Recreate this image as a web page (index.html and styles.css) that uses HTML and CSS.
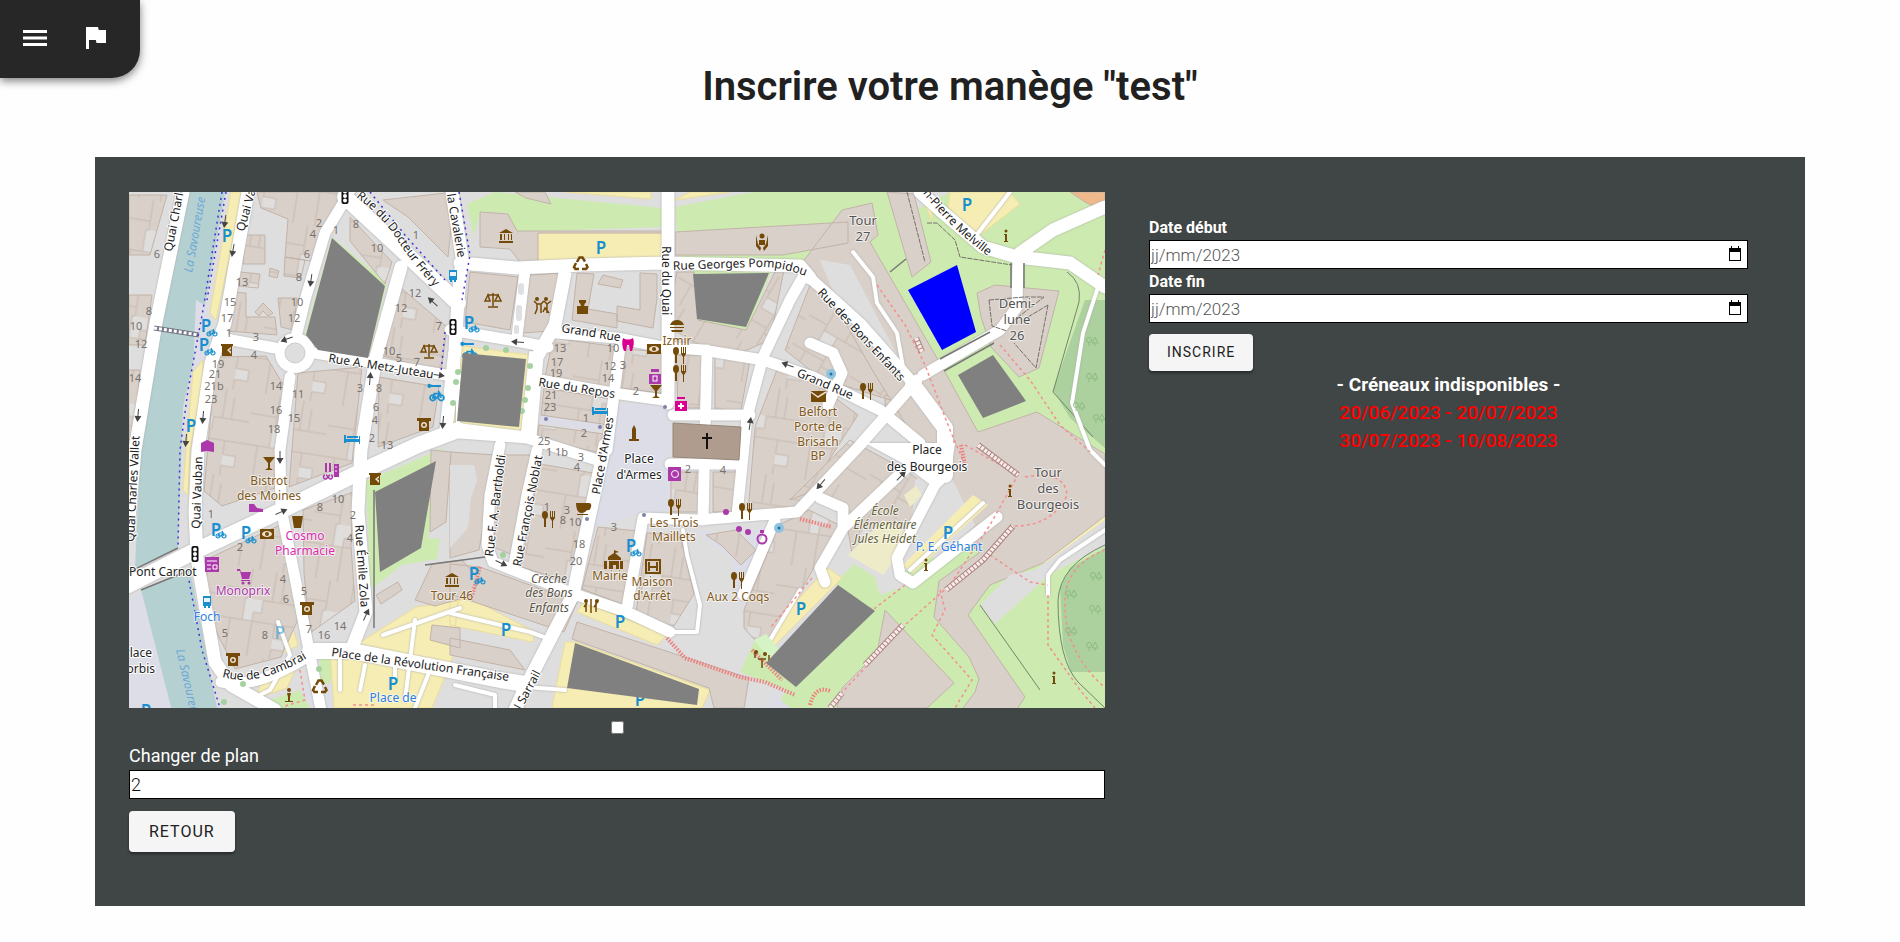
FILE: index.html
```html
<!DOCTYPE html>
<html lang="fr">
<head>
<meta charset="utf-8">
<title>Inscrire votre manège</title>
<link rel="stylesheet" href="styles.css">
</head>
<body>
<nav class="corner-nav" aria-label="Navigation">
  <button class="icon-btn" type="button" aria-label="Menu"><svg viewBox="0 0 32 32"><path d="M4 8h24v3H4zM4 14.500h24v3H4zM4 21h24v3H4z"/></svg></button>
  <button class="icon-btn" type="button" aria-label="Drapeau"><svg viewBox="0 0 32 32"><path d="M6 5h12l.8 3H26v13h-9.500l-.7-3H9v9H6z"/></svg></button>
</nav>
<h1 class="title">Inscrire votre manège "test"</h1>
<main class="panel">
<section class="plan">
<svg class="map" viewBox="129 192 976 516" role="img" aria-label="Plan des emplacements">
<defs>
<pattern id="lots" width="78" height="87" patternUnits="userSpaceOnUse" patternTransform="rotate(9)">
  <rect width="78" height="87" fill="#d9d0c9"/>
  <path d="M24 30h18v13h-8v9h-10zM57 66h13v11h-13z" fill="#dfdedd"/>
  <path d="M0 21h27v-21M27 21v9h-3v22h10v-9h8v-13h36M51 0v30M0 52h24M12 52v35M34 52h44M34 52v35M57 52v14h13v11h-13v10M60 30v-22" fill="none" stroke="#c8bbb1"/>
</pattern>
<pattern id="lots2" width="66" height="75" patternUnits="userSpaceOnUse" patternTransform="rotate(30)">
  <rect width="66" height="75" fill="#d9d0c9"/>
  <path d="M21 24h15v12h-15z" fill="#dfdedd"/>
  <path d="M0 18h21v18h15v-12h-15M21 18v-18M36 24h30M45 0v24M36 36v39M0 51h36M36 57h30M15 51v24" fill="none" stroke="#c8bbb1"/>
</pattern>
<g id="food" fill="#734a08"><ellipse cx="-4" cy="-4" rx="3" ry="4"/><path d="M-5-1h2v9h-2zM1-8h1v6h1v-6h1v6h1v-6h1v7l-2 3v7H3V2L1-1z"/></g>
<g id="bank" fill="#734a08"><path d="M-7-3 0-7l7 4zM-6-2h2v6h-2zM-2-2h1v6h-1zM2-2h1v6H2zM5-2h1v6H5zM-7 5H7v2H-7z"/></g>
<g id="scale" fill="none" stroke="#734a08" stroke-width="1.500"><path d="M0-7V6M-5 7H5M-6-5H6M-5-5l-3 6h5zM5-5 2 1h6z"/></g>
<g id="atm"><path d="M-7-7H7v3H5V6H-5v-10h-2z" fill="#734a08"/><circle r="3" fill="#eadfce"/><circle r="1.500" fill="#734a08"/></g>
<g id="note"><path d="M-7-5H7V5H-7z" fill="#734a08"/><ellipse rx="5" ry="3" fill="#eadfce"/><circle r="2" fill="#734a08"/></g>
<g id="bar" fill="#734a08"><path d="M-6-6H6L1 0v5l3 2H-4l3-2V0z"/></g>
<g id="book" fill="#734a08"><path d="M-6-6H6v2H5V6H-5v-10h-1z"/><path d="m4-3-4 3 4 4v-3L2 0l2-1z" fill="#e7dccd"/></g>
<g id="info" fill="#734a08"><circle cy="-5" r="1.500"/><path d="M-2-2h3v7h1v1h-4V5h1v-6h-1z"/></g>
<g id="bed" fill="#1a8fd0"><path d="M-8-4h2v4H7v-3h1v8H7V3H-6v1h-2zM-5-3h11v2H-5z"/></g>
<g id="bus" fill="#1a8fd0"><path d="M-4-6h8v10H3v2H1V4h-2v2h-2V4h-1z"/><path d="M-3-4h6v4h-6z" fill="#e8f4fa"/></g>
<g id="bike" fill="none" stroke="#1a8fd0" stroke-width="1.200"><circle cx="-3" cy="2" r="2"/><circle cx="3" cy="2" r="2"/><path d="m-3 2 1-3h4L0 2zM1-3l2 5"/></g>
<g id="rent"><path d="M-7-8a2 2 0 1 0 1 3h10v-2h-9z" fill="#1a8fd0"/><use href="#bike" transform="translate(0 3)scale(1.400)"/></g>
<g id="recycle" fill="none" stroke="#734a08" stroke-width="2.500"><path d="m-4-1 2.500-4.500h3L4-1.500M5 1l1.500 3-1.500 2H1M-2 6h-3.500L-7 4l2-4"/></g>
<g id="light"><rect x="-3.500" y="-8" width="7" height="16" rx="2" fill="#111"/><g fill="#fff"><circle cy="-4.500" r="2"/><circle r="2"/><circle cy="4.500" r="2"/></g></g>
<g id="arrow" fill="#444"><path d="M-6-.5h7v-3L7 0 1 3.500V.5h-7z"/></g>
<g id="tree" fill="none" stroke="#8dbb80"><circle cx="-2" r="2.500"/><path d="M-2 2v4M4-3 1 3h6zM4 3v3"/></g>
<g id="bot" fill="#734a08"><circle cy="-5" r="2"/><path d="M-2-2h4L1 2v5h-2V2zM-4 6h8v1h-8z"/></g>
<path id="pDoc" d="M356 197 Q384 218 398 241 T448 302"/>
<path id="pPom" d="M673 270 L755 267 Q780 266 808 277"/>
<path id="pCam" d="M222 677 Q260 688 312 655"/>
<path id="pMel" d="M866 138 L922 192 Q950 228 988 256"/>
</defs>
<rect x="129" y="192" width="976" height="516" fill="#dfdedf"/>
<!-- parks -->
<g fill="#cdebb0">
<path d="M495 192 663 208v19l-146 5-9-19-28-1-6 25-7-33zM675 207l78-15h137l30 16 30-16h155v516H775l20-30 45-100 14-14 25 15 30-10 40-60 5-40-100-190-15-10-70-10-89 11z"/>
<path d="M332 237 387 283 368 360 318 352 305 334zM366 481l78-33-16 90 12 1 -3 20-35 6-28 22-4-1zM692 270h80l-25 60-52-10zM320 659h18l-9 25-8-3zM270 700l30-10 10 18h-30z"/>
<path d="m755 640 25 12 20 30-8 10-52-20z"/>
</g>
<g fill="#b5d0d0"><path d="M188 192h37l-25 141-17 74-5 141-43 20 6-123 20-122zM141 590l49-20 27 138h-46z"/></g>
<path d="M129 600l12-10 30 118h-42zM617 402l55 5-2 55h28v50h-53l-50 15-8-20zM697 529l43 10 35-18 22-5-40 110-23-32V560l-28-20zM770 690l20 18h-20zM1078 495h27v12h-25zM300 690l35-5 16 23h-35zM196 300l13 8-6 50-10 15zM540 414l60 8v8l-61-6z" fill="#dddde8"/>
<g fill="#f6edb4" stroke="#eadd9b">
<path d="M231 192h12l-27 128-6-7zM193 372l10-12v20l-13 70-2 45-5-5 3-40zM537 233h125v27l-125 4zM565 192h86v7zM690 192h40l-55 8zM950 192h60l10 12-45 35-27-32zM920 192h12v30zM264 617l24-5 10 33-22 13-12-20zM260 685l35-15-8 18-30 10zM356 645l60-38 42-6-6 58-20 49h-98l-4-56zM450 602l20-4 65 34-2 10-83-17zM583 602l84 33-10 10-80-33zM565 642h10l135 48-8 18h-150zM455 345l75 10-8 77-70-8zM828 568l14 10-72 72v-22zM1043 562l62-47v12l-59 38z"/></g>
<!-- buildings with plots -->
<g fill="url(#lots)" stroke="#c2b3a8">
<path d="M129 195h38l-17 60h-21zM129 295h23l-7 50h-16zM129 370h11l-6 70h-5z"/>
<path d="M257 192h85l-14 35-18 34-25-4 3-38-27-11zM245 235h20v29h-22zM285 257l20 3-4 18-17-2zM270 268l9 3-2 7-8-2zM240 272l20 2-2 14-20-2zM230 292l16 1v24h29l2 18-50-4zM278 298h19l-4 32-12-3zM255 312l8-9 10 10-5 3-5-5-4 5z"/>
<path d="m216 357 50-1 18 30-9 62v40l-53 18-18-15zM298 373l64-6-10 96-63 24zM303 510l50-18-2 54 4 55-45 32-6-60z"/>
<path d="m205 560 75-35 20 90-19 42-46 12-25-50zM350 217l42 45-7 22-35-43zM400 287l47 40-6 45-58-16zM379 377l60 10-6 40-55 20z"/>
<path d="m553 338 65 9-8 43-65-13zM544 388l68 11-3 26-68-10zM539 425l65 9-7 18-60-12zM540 464l53 9-20 110-52-16zM598 527l40 4-14 74-42-16z"/>
<path d="m625 349 37 3v41l-43-5zM676 355h26v53h-24zM715 357l35 3-9 50h-26zM671 472h30v40h-30zM713 472h24l-5 40h-19zM755 427l25-65 38 23 40 30-60 93-50 5z"/>
<path d="m647 533 33 1 14 60-22 35-36-16zM706 535l30-5 20 20-15 15-20-20zM744 610l35-85 30-15 30 15-35 60-40 65-20-22z"/>
</g>
<g fill="url(#lots2)" stroke="#c2b3a8">
<path d="m785 350 25-65 95 90-15 25-70-22zM885 395l20 5 40 30-10 15-50-28zM790 500l60-60 55 30-60 50-30-30zM848 530l60-58 27 20-56 80-27-18z"/>
<path d="m677 272h17l4 48 48 10 30-60h8l-14 70-30 13-60-8-14-20z"/>
</g>
<!-- large buildings -->
<g fill="#d9d0c9" stroke="#c2b3a8">
<path d="m383 200 72-8-7 65-40-40zM450 452l46 3-17 95-29 8zM504 455h27l-18 100-20-8z"/>
<path d="m480 212 28 2 9 17h145v2H538v30l-18-1-10-13-30-2zM515 192h30l6 12-25-6zM675 232l173-10v21l-65 12H675zM842 210l30-7 6 32-8 7 75 130 33 60 59-20 68 42v62l-62 47-53 22-22 30 57 82-10 15h-55l15-20 4-13-10-22-35-40 5-36 40-28-80-140-25-40-40-70-32-40z"/>
<path d="m887 192 27 2 17 68-19 15zM977 293l18-8 64 6-20 77-20 9-28-30-10-30zM885 610l69 73-27 25h-90l5-20 35-35z"/>
<path d="m470 272 48 5-8 53-45-8zM530 275l30-2-10 58-28 2zM577 273l17 1-6 35 29 5v14l-45-8zM603 275l20 5-3 8-22-4zM640 273l17 1v24l-4 30-36-7v-15l23 4z"/>
<path d="m480 567 97 35-13 30-114-38v-30zM577 622l172 56-5 30h-30l-5-20-137-49zM432 564l30-4 18 20-10 16-35 10-20-6zM431 450l20 2-5 70-16 10zM376 595l22-13 4 8-21 14zM432 625l28 3v20l-30-8zM450 638l60 12 15 20-75-15z"/>
<path d="m1070 192h35v20l-20-10z" fill="#efb98c"/>
</g>
<g fill="#dfdedf"><path d="m980 605 30-30 25-5 70-50v26l-55 28-55 50zM915 480l30-15 30 60-35 35-30-10zM820 260l30 5 55 105-60-50z"/><path d="M870 560l55 20-45 15z"/><path d="M450 465h24l3 15-6 18-3 30-18 20v-40z"/></g>
<path d="m973 495 15 10-75 68-10-8z" fill="#f6edb4"/>
<path d="M904 495l12-9 6 9-12 12zM848 555l35-35 30 15-30 40z" fill="#eeebc9"/>
<path d="M1085 300h20v148l-35-30-17-28zM1105 548l-35 20-10 20 3 57 8 27h34z" fill="#acd19e"/>
<path d="M1105 545q-45 20-47 55 0 60 20 82l27 26M1067 272q15 10 12 30l-26 90 40 45M980 605l60 85" fill="none" stroke="#71866b"/>
<!-- streets -->
<g class="road">
<g class="w13"><path d="M183 192 156 323 135 450 128 530M248 192 225 323 211 363 198 450 195 512 197 558 205 605 215 662 231 685 275 710M401 267 376 357 361 450 358 512 366 612 352 648M452 192 462 258 458 300 455 350 446 430M605 445 587 528 573 595 523 692 515 710M668 192V403M460 263 517 268 583 265 663 263 800 266 810 278M530 437 537 357 555 325 565 273M1017 257 1070 263 1105 287M1020 253 1053 230 1105 207M920 192 940 210 983 247 1017 257"/></g>
<g class="w16"><path d="M128 585 191 553 278 512 358 473 418 445 458 430M345 197 402 250 458 303M310 651H352L500 680 525 684M913 385 945 428 945 475"/></g>
<g class="w11"><path d="M290 377 280 450 281 508 295 578 308 645 321 710M275 348 221 338M296 337 305 300 325 233 345 200 350 190M315 353 458 377M221 682Q255 690 310 655M450 330 510 340 548 347M555 333 617 338 663 347 703 350 763 360 813 377 880 410 920 443M525 270 517 337M540 380 613 393 663 400M620 347 607 450M446 432 527 438 597 460M500 445 490 495 487 545 493 562 577 595 627 612 670 632M537 450 527 495 513 570M627 608 643 518 697 520 797 512 860 445 917 380M703 520 707 350M673 415H750M670 464H740M803 277 790 300 763 357 747 417 737 515M775 520 743 595M810 278 860 323 913 383M820 498 843 508V528L820 568 825 582M843 528 920 455M940 475 897 558 900 575 913 583 997 517M1018 260 1017 307 1000 330 923 375M810 343 833 353 842 373 828 405"/></g>
<g class="w6"><path d="M670 632H697L700 605 687 555 683 530M1098 287 1083 333 1072 403 1090 450 1105 465M853 252 873 277 877 303 897 333 903 367M1105 530 1060 560 1048 575V595M1010 192 975 237M450 613 530 632 552 640M800 590 770 640M910 570 983 503M278 622 290 655 270 690 250 700M383 635 460 608M415 620 405 700M365 665 360 690M340 660V690M430 670 415 708M395 665V680M500 685 565 690M455 685 495 695V708M458 353V425L523 433 531 353"/></g>
<path d="M865 443h90l-5 35-13 12-35-27z" fill="#fff" stroke="none"/>
<circle cx="295" cy="353" r="20" fill="#fff" stroke="none"/>
</g>
<path d="M673 423l68 4-2 33-66-3z" fill="#af9c8e" stroke="#968677"/>
<circle cx="295" cy="353" r="10" fill="#dfdedf" stroke="#ccc"/>
<g fill="#e0e0e0"><rect x="518" y="283" width="6" height="12" rx="3"/><rect x="516" y="305" width="6" height="16" rx="3"/><rect x="514" y="325" width="5" height="9" rx="2"/></g>
<path d="M129 572 178 548M141 590 190 570M1011 263v25M1024 263v25M990 332l-50 27M994 343l-50 28M374 628V490M425 565l60-8M890 272l16-13" fill="none" stroke="#777" stroke-width="1.500"/>
<path d="M154 328l45 7" stroke="#778" stroke-width="5"/><path d="M154 328l45 7" stroke="#fff" stroke-width="3" stroke-dasharray="3 2"/>
<g fill="none" stroke="#3d35d8" stroke-width="1.500" stroke-dasharray="2 4"><path d="M222 192 203 310 188 390 180 450 178 545M188 575 202 650 220 708M370 192 405 235 445 280M459 192 470 255 462 300M445 332 441 372M226 192 207 300"/></g>
<g fill="none" stroke="#f29090" stroke-width="1.500" stroke-dasharray="3 3"><path d="M877 285 905 325 925 365 950 430 965 465M1000 345 1030 380 1060 425 1090 452M1105 250 1098 275M965 445 1018 475 990 525 950 585 905 625 835 700M1025 477Q1065 470 1067 495 1052 527 1012 526M990 555 1030 582 1048 585M1048 595V645L1080 690 1095 708M1105 550Q1066 565 1065 600 1063 650 1105 688M940 590 945 610 932 635 972 680 955 708M812 578 770 628M905 585 870 612M300 670 305 700 285 706M353 705H375"/></g>
<g fill="none" stroke="#ee8080" stroke-width="4" stroke-dasharray="1.500 1.500"><path d="M667 638 685 658 740 677 765 682 795 695M800 519 832 527M961 445l4 20M810 705q5-20 20-14M480 567 471 600M752 650l30 30"/></g>
<g fill="none" stroke="#a98782" stroke-width="6"><path d="M946 590 983 560 1013 526M865 665 903 625M978 445l40 30M916 338l6 14M830 708l12-15"/></g>
<g fill="none" stroke="#fbeaea" stroke-width="4" stroke-dasharray="3 1"><path d="M946 590 983 560 1013 526M865 665 903 625M978 445l40 30M916 338l6 14M830 708l12-15"/></g>
<path d="m907 192 18 70M927 223h10l18 17 5 17 52 8M989 300l35-3 20 0-32 25M989 300l3 26 15 5M1048 305l-12 63-22-25M1048 305l-20 12" fill="none" stroke="#77706c" stroke-dasharray="5 1"/>
<path d="m754 640 12-6 24 28-12 8z" fill="#d5f3c5"/>
<!-- trees -->
<g fill="#a5d1a0"><circle cx="486" cy="348" r="3"/><circle cx="506" cy="350" r="3"/><circle cx="458" cy="372" r="3"/><circle cx="456" cy="382" r="3"/><circle cx="453" cy="403" r="3"/><circle cx="530" cy="366" r="3"/><circle cx="528" cy="388" r="3"/><circle cx="525" cy="400" r="3"/><circle cx="522" cy="411" r="3"/><circle cx="319" cy="669" r="3"/><circle cx="243" cy="684" r="3"/><circle cx="224" cy="702" r="3"/><circle cx="503" cy="555" r="3"/></g>
<use href="#tree" x="1091" y="340"/><use href="#tree" x="1091" y="376"/><use href="#tree" x="1078" y="405"/><use href="#tree" x="1098" y="417"/><use href="#tree" x="1095" y="575"/><use href="#tree" x="1070" y="593"/><use href="#tree" x="1094" y="608"/><use href="#tree" x="1070" y="630"/><use href="#tree" x="1091" y="645"/>
<g fill="#8fc3df"><circle cx="831" cy="374" r="5"/><circle cx="779" cy="528" r="5"/></g><g fill="#24719b"><circle cx="831" cy="374" r="1.500"/><circle cx="779" cy="528" r="1.500"/></g>
<g fill="#ac39ac"><circle cx="726" cy="512" r="3"/><circle cx="739" cy="529" r="3"/><circle cx="748" cy="532" r="3"/></g>
<g fill="#8080a8"><circle cx="546" cy="419" r="2"/><circle cx="600" cy="427" r="2"/><circle cx="665" cy="407" r="2"/><circle cx="587" cy="519" r="2"/><circle cx="644" cy="515" r="2"/></g>
<!-- points of interest -->
<use href="#food" x="680" y="355"/><use href="#food" x="680" y="373"/><use href="#food" x="867" y="391"/><use href="#food" x="675" y="507"/><use href="#food" x="746" y="511"/><use href="#food" x="549" y="519"/><use href="#food" x="738" y="580"/>
<use href="#bank" x="506" y="236"/><use href="#bank" x="452" y="580"/><use href="#scale" x="493" y="300"/><use href="#scale" x="429" y="351"/>
<use href="#atm" x="424" y="425"/><use href="#atm" x="307" y="609"/><use href="#atm" x="233" y="660"/><use href="#note" x="267" y="534"/><use href="#note" x="654" y="349"/>
<use href="#bar" x="269" y="463"/><use href="#bar" x="656" y="391"/><use href="#book" x="227" y="350"/><use href="#book" x="375" y="479"/>
<use href="#info" x="1006" y="236"/><use href="#info" x="1010" y="491"/><use href="#info" x="926" y="565"/><use href="#info" x="1054" y="678"/>
<use href="#bed" x="352" y="439"/><use href="#bed" x="600" y="411"/><use href="#bus" x="453" y="276"/><use href="#bus" x="207" y="602"/>
<use href="#bike" x="212" y="332"/><use href="#bike" x="210" y="351"/><use href="#bike" x="474" y="328"/><use href="#bike" x="221" y="534"/><use href="#bike" x="251" y="539"/><use href="#bike" x="480" y="580"/><use href="#bike" x="636" y="552"/><use href="#rent" x="437" y="392"/><use href="#rent" x="470" y="350"/>
<use href="#recycle" x="581" y="263"/><use href="#recycle" x="320" y="686"/><use href="#light" x="345" y="196"/><use href="#light" x="453" y="327"/><use href="#light" x="195" y="554"/>
<use href="#bot" x="289" y="695"/><path d="M629 439h3v-10l2-4 2 4v10h3v2h-10z" fill="#734a08"/>
<g fill="#734a08"><path d="M670 325q2-5 7-5t7 5zM670 327h14v1h-14zM671 330h12l-1 2h-10zM811 391h15v11h-15zM292 516h11l-2 12h-7zM576 503h13q3 0 2 4t-4 3q-2 3-6 3-5-1-5-10zM577 514h11v1h-11zM579 300h7v3h-7zM577 306h11v8h-11zM580 303h5l-1 3h-3zM608 557l6-4v-3l5 2-4 1 6 5v2h-13zM604 561h3v8h-3zM609 561h10v8h-3v-4h-3v4h-4zM620 561h3v8h-3z"/><circle cx="762" cy="236" r="2.500"/><path d="M759 240h6v5h-6zM756 235l2 9 3 4-1 3-4-5zM768 235l-2 9-3 4 1 3 4-5z"/></g>
<path d="M811 392l7 5 8-5" fill="none" stroke="#eadfce" stroke-width="1.500"/><path d="M646 560h14v13h-14zM649 562v9M657 562v9M650 567h6" fill="none" stroke="#734a08" stroke-width="2"/>
<g fill="none" stroke="#734a08" stroke-width="1.500"><path d="M534 301l3 3 4 0 3-3M541 304v9M537 304v5l-2 5M544 301l3 3 4-3M547 304v9M543 312l2-4 4 5M591 599v14M586 600v12M596 600v12M587 603l-3 4M597 603l-3 4M758 659h8M755 652v6M762 660v8M769 655v6"/></g><g fill="#734a08"><circle cx="537" cy="299" r="2"/><circle cx="546" cy="299" r="2"/><circle cx="586" cy="601" r="2"/><circle cx="597" cy="601" r="2"/><circle cx="756" cy="652" r="2"/><circle cx="765" cy="654" r="2"/></g>
<g fill="#ac39ac"><path d="M201 443l6-3 7 3 0 9-7-1-6 1zM205 557h14v15h-14zM237 569h3l1 3h10l-2 7h-7l-2-8h-3zM241 580h9v1h-9zM249 504h5l3 4 6 1v3h-14zM668 467h13v14h-13zM651 369h8v3h-8zM649 374h12v10h-12zM334 464h5v13h-5zM325 463h2v9h-2zM329 463h2v9h-2z"/><circle cx="243" cy="583" r="1.500"/><circle cx="249" cy="583" r="1.500"/></g>
<g fill="none" stroke="#fff"><circle cx="675" cy="474" r="3.500"/><rect x="653" y="376" width="4" height="5"/><path d="M207 561h10M207 565h4M207 569h4M213 565h4v4h-4zM335 467h2M335 471h2"/></g><circle cx="762" cy="539" r="4.500" fill="none" stroke="#ac39ac" stroke-width="2"/><path d="M760 530h4v3h-4z" fill="#ac39ac"/><path d="M325 475a2 2 0 1 0 1 0M330 475a2 2 0 1 0 1 0" fill="none" stroke="#ac39ac" stroke-width="1.500"/>
<path d="M623 338q5 3 10 0 2 5-1 13h-2l-1-6h-2l-1 6h-2q-3-7-1-13zM677 397h8v2h-8zM675 401h12v10h-12z" fill="#da0092"/><path d="M680 403h2v2h2v2h-2v2h-2v-2h-2v-2h2z" fill="#fff"/>
<path d="M707 433v16M702 438h10" stroke="#111" stroke-width="2"/>
<use href="#arrow" transform="translate(225 221)rotate(98)"/><use href="#arrow" transform="translate(233 250)rotate(100)"/><use href="#arrow" transform="translate(311 280)rotate(98)"/><use href="#arrow" transform="translate(287 339)rotate(160)"/><use href="#arrow" transform="translate(138 415)rotate(95)"/><use href="#arrow" transform="translate(203 417)rotate(95)"/><use href="#arrow" transform="translate(186 440)rotate(95)"/><use href="#arrow" transform="translate(370 379)rotate(-85)"/><use href="#arrow" transform="translate(433 302)rotate(-138)"/><use href="#arrow" transform="translate(438 375)rotate(8)"/><use href="#arrow" transform="translate(443 422)rotate(95)"/><use href="#arrow" transform="translate(518 342)rotate(185)"/><use href="#arrow" transform="translate(750 424)rotate(-82)"/><use href="#arrow" transform="translate(788 365)rotate(200)"/><use href="#arrow" transform="translate(821 484)rotate(130)"/><use href="#arrow" transform="translate(901 476)rotate(-46)"/><use href="#arrow" transform="translate(280 457)rotate(90)"/><use href="#arrow" transform="translate(281 512)rotate(-24)"/><use href="#arrow" transform="translate(366 615)rotate(-65)"/><use href="#arrow" transform="translate(501 563)rotate(25)"/>
<!-- parking signs -->
<g class="park"><text x="227" y="242">P</text><text x="191" y="432">P</text><text x="206" y="332">P</text><text x="204" y="351">P</text><text x="601" y="254">P</text><text x="469" y="329">P</text><text x="967" y="211">P</text><text x="216" y="536">P</text><text x="246" y="539">P</text><text x="393" y="690">P</text><text x="280" y="639" opacity=".5">P</text><text x="474" y="580">P</text><text x="506" y="636">P</text><text x="620" y="628">P</text><text x="631" y="552">P</text><text x="640" y="706">P</text><text x="948" y="539">P</text><text x="801" y="615">P</text><text x="146" y="717">P</text></g>
<!-- house numbers -->
<g class="num"><text x="157" y="258">6</text><text x="149" y="315">8</text><text x="136" y="330">10</text><text x="141" y="348">12</text><text x="135" y="382">14</text><text x="319" y="227">2</text><text x="313" y="238">4</text><text x="307" y="258">6</text><text x="299" y="281">8</text><text x="297" y="306">10</text><text x="294" y="322">12</text><text x="336" y="234">1</text><text x="356" y="228">8</text><text x="377" y="252">10</text><text x="242" y="286">13</text><text x="230" y="306">15</text><text x="227" y="322">17</text><text x="229" y="337">1</text><text x="256" y="341">3</text><text x="254" y="359">4</text><text x="218" y="368">19</text><text x="215" y="378">21</text><text x="214" y="390">21b</text><text x="211" y="403">23</text><text x="276" y="390">14</text><text x="276" y="414">16</text><text x="274" y="433">18</text><text x="298" y="398">11</text><text x="294" y="422">15</text><text x="360" y="392">3</text><text x="379" y="392">8</text><text x="376" y="411">6</text><text x="375" y="424">4</text><text x="372" y="442">2</text><text x="387" y="449">13</text><text x="416" y="239">1</text><text x="415" y="297">12</text><text x="401" y="312">12</text><text x="439" y="330">7</text><text x="389" y="355">10</text><text x="399" y="362">5</text><text x="417" y="366">7</text><text x="560" y="352">13</text><text x="557" y="366">17</text><text x="556" y="377">19</text><text x="551" y="399">21</text><text x="550" y="411">23</text><text x="544" y="445">25</text><text x="613" y="352">10</text><text x="610" y="370">12</text><text x="608" y="382">14</text><text x="623" y="369">3</text><text x="636" y="395">2</text><text x="586" y="422">1</text><text x="584" y="437">2</text><text x="557" y="456">1 1b</text><text x="581" y="461">3</text><text x="577" y="471">4</text><text x="688" y="473">2</text><text x="723" y="474">4</text><text x="547" y="511">1</text><text x="567" y="514">3</text><text x="563" y="524">8</text><text x="575" y="526">10</text><text x="614" y="531">3</text><text x="579" y="548">18</text><text x="576" y="565">20</text><text x="211" y="518">1</text><text x="320" y="511">8</text><text x="338" y="503">10</text><text x="353" y="519">2</text><text x="350" y="542">4</text><text x="240" y="551">2</text><text x="283" y="583">4</text><text x="286" y="603">6</text><text x="304" y="595">5</text><text x="225" y="637">5</text><text x="265" y="639">8</text><text x="309" y="633">7</text><text x="324" y="639">16</text><text x="340" y="630">14</text></g>
<!-- street names -->
<g class="street">
<text transform="translate(172 252)rotate(-79)">Quai Charles Vallet</text><text transform="translate(134 542)rotate(-87)">Quai Charles Vallet</text><text transform="translate(244 232)rotate(-74)">Quai Vauban</text><text transform="translate(200 529)rotate(-88)">Quai Vauban</text>
<text><textPath href="#pDoc">Rue du Docteur Fréry</textPath></text><text transform="translate(458 258)rotate(80)" text-anchor="end">Rue de la Cavalerie</text><text transform="translate(328 362)rotate(9)">Rue A. Metz-Juteau</text><text transform="translate(662 246)rotate(90)">Rue du Quai</text><text><textPath href="#pPom">Rue Georges Pompidou</textPath></text><text transform="translate(817 293)rotate(47)">Rue des Bons Enfants</text><text transform="translate(561 332)rotate(9)">Grand Rue</text><text transform="translate(796 376)rotate(23)">Grand Rue</text><text transform="translate(538 386)rotate(9)">Rue du Repos</text><text transform="translate(600 495)rotate(-80)">Place d'Armes</text><text transform="translate(355 525)rotate(86)">Rue Émile Zola</text><text transform="translate(493 557)rotate(-83)">Rue F. A. Bartholdi</text><text transform="translate(521 567)rotate(-79)">Rue François Noblat</text><text><textPath href="#pCam">Rue de Cambrai</textPath></text><text transform="translate(331 656)rotate(8)">Place de la Révolution Française</text><text transform="translate(541 673)rotate(-62)" text-anchor="end">Rue du Général Sarrail</text><text x="129" y="576">Pont Carnot</text><text><textPath href="#pMel" startOffset="100%" text-anchor="end">Rue Jean-Pierre Melville</textPath></text>
<g text-anchor="middle"><text x="639" y="463">Place</text><text x="639" y="479">d'Armes</text><text x="927" y="454">Place</text><text x="927" y="471">des Bourgeois</text></g><g text-anchor="end"><text x="152" y="657">Place</text><text x="155" y="673">Corbis</text></g>
</g>
<g class="water"><text transform="translate(192 273)rotate(-80)">La Savoureuse</text><text transform="translate(176 650)rotate(77)">La Savoureuse</text></g>
<g class="place brown"><text x="677" y="345">Izmir</text><text x="269" y="485">Bistrot</text><text x="269" y="500">des Moines</text><text x="818" y="416">Belfort</text><text x="818" y="431">Porte de</text><text x="818" y="446">Brisach</text><text x="818" y="460">BP</text><text x="674" y="527">Les Trois</text><text x="674" y="541">Maillets</text><text x="610" y="580">Mairie</text><text x="652" y="586">Maison</text><text x="652" y="600">d'Arrêt</text><text x="738" y="601">Aux 2 Coqs</text><text x="452" y="600">Tour 46</text></g>
<g class="place pink"><text x="305" y="540">Cosmo</text><text x="305" y="555">Pharmacie</text></g><g class="place purple"><text x="243" y="595">Monoprix</text></g>
<g class="place blue"><text x="207" y="621">Foch</text><text x="393" y="702">Place de</text><text x="949" y="551">P. E. Géhant</text></g>
<g class="place school"><text x="549" y="583">Crèche</text><text x="549" y="597">des Bons</text><text x="549" y="612">Enfants</text></g><g class="place school olive"><text x="885" y="515">École</text><text x="885" y="529">Élémentaire</text><text x="885" y="543">Jules Heidet</text></g>
<g class="place tower"><text x="863" y="225">Tour</text><text x="863" y="241">27</text><text x="1017" y="308">Demi-</text><text x="1017" y="324">lune</text><text x="1017" y="340">26</text><text x="1048" y="477">Tour</text><text x="1048" y="493">des</text><text x="1048" y="509">Bourgeois</text></g>
<!-- pitches -->
<g class="pitch"><path d="M332 238 385 286 368 358 318 350 306 335z"/><path d="M463 353 526 359 519 427 457 421z"/><path d="M693 274 769 273 746 327 697 319z"/><path class="chosen" d="M908 290 957 265 976 332 942 350z"/><path d="M958 375 993 355 1026 401 983 418z"/><path d="M375 492 436 461 421 548 380 572z"/><path d="M575 643 699 689 697 705 567 688z"/><path d="M838 585 875 611 796 687 766 663z"/></g>
</svg>
<div class="toggle"><input type="checkbox" aria-label="Afficher le plan"></div>
<label class="plan-label" for="plan">Changer de plan</label>
<input class="field plan-field" id="plan" type="text" value="2">
<button class="btn btn-large" type="button">Retour</button>
</section>
<section class="booking">
<form>
<label class="date-label" for="debut">Date début</label>
<div class="date"><input class="field" id="debut" type="text" value="jj/mm/2023"><button class="picker" type="button" aria-label="Choisir la date de début"><svg viewBox="0 0 14 16"><path d="M1 2h2V0h1v2h6V0h1v2h2v13H1zm1 4v8h10V6z" fill-rule="evenodd"/></svg></button></div>
<label class="date-label" for="fin">Date fin</label>
<div class="date"><input class="field" id="fin" type="text" value="jj/mm/2023"><button class="picker" type="button" aria-label="Choisir la date de fin"><svg viewBox="0 0 14 16"><path d="M1 2h2V0h1v2h6V0h1v2h2v13H1zm1 4v8h10V6z" fill-rule="evenodd"/></svg></button></div>
<button class="btn" type="button">Inscrire</button>
</form>
<div class="slots"><h2>- Créneaux indisponibles -</h2><p>20/06/2023 - 20/07/2023</p><p>30/07/2023 - 10/08/2023</p></div>
</section>
</main>
</body>
</html>
```
FILE: styles.css
```css
* { box-sizing: border-box; }
body { margin: 0; background: #fefefe; color: #212121; font-family: Roboto, "Liberation Sans", sans-serif; }
.corner-nav { position: absolute; top: 0; left: 0; display: flex; gap: 29px; padding: 22px 28px 24px 19px; background: #272727; border-bottom-right-radius: 28px; box-shadow: 0 3px 8px rgba(0, 0, 0, .5); }
.icon-btn { width: 32px; height: 32px; padding: 0; border: 0; background: none; }
.icon-btn svg { display: block; width: 32px; height: 32px; fill: #fff; }
.title { margin: 0; padding: 63px 0 46px; font-size: 40px; line-height: 48px; font-weight: 600; text-align: center; }
.panel { display: grid; grid-template-columns: 976fr 599fr; column-gap: 44px; width: 90%; margin: 0 auto 36px; padding: 35px 57px 54px 34px; background: #404545; color: #fff; }
.plan { min-width: 0; }
.map { display: block; width: 100%; height: auto; }
.toggle { display: flex; justify-content: center; padding: 13px 0 8px; }
.toggle input { width: 13px; height: 13px; margin: 0; }
.plan-label { display: block; padding-bottom: 1px; font-size: 18px; line-height: 27px; }
.field { display: block; width: 100%; height: 29px; padding: 0 1px; border: 1px solid #000; border-radius: 0; background: #fff; color: #555; font: 300 17px/27px Roboto, "Liberation Sans", sans-serif; }
.plan-field { color: #111; font-size: 18px; }
.btn { display: block; margin-top: 11px; height: 37px; padding: 0 18px; border: 0; border-radius: 4px; background: #f5f5f5; color: #212121; font: 14px/37px Roboto, "Liberation Sans", sans-serif; letter-spacing: 1px; text-transform: uppercase; box-shadow: 0 2px 3px rgba(0, 0, 0, .4); }
.btn-large { margin-top: 12px; height: 41px; padding: 0 20px; font-size: 16px; line-height: 41px; }
.booking { padding-top: 24px; }
.date-label { display: block; font-size: 16px; line-height: 24px; font-weight: 700; }
.date { position: relative; margin-bottom: 1px; }
.picker { position: absolute; top: 6px; right: 4px; width: 16px; height: 16px; padding: 0; border: 0; background: none; }
.picker svg { display: block; width: 14px; height: 16px; }
.slots { text-align: center; font-size: 19px; line-height: 28px; }
.slots h2 { margin: 0; font-size: 19px; line-height: 28px; font-weight: 700; }
.slots p { margin: 0; color: #f00; font-weight: 500; }
.map text { font-family: "Noto Sans", "DejaVu Sans", sans-serif; paint-order: stroke; stroke-linejoin: round; }
.road { fill: none; stroke: #fff; stroke-linecap: round; stroke-linejoin: round; filter: drop-shadow(0 0 1px #aaa); }
.w16 { stroke-width: 16px; }
.w13 { stroke-width: 13px; }
.w11 { stroke-width: 11px; }
.w6 { stroke-width: 4px; }
.map .park text { fill: #1a8fd0; font-family: "Noto Sans", sans-serif; font-size: 17px; font-weight: 600; text-anchor: middle; }
.num { fill: #77726e; font-size: 11px; text-anchor: middle; }
.street { fill: #222; stroke: #fff; stroke-width: 2px; font-size: 12px; }
.water { fill: #6da9d6; font-size: 12px; font-style: italic; }
.place { stroke: rgba(255, 255, 255, .6); stroke-width: 2px; font-size: 12px; text-anchor: middle; }
.brown { fill: #825a20; }
.pink { fill: #da2bae; }
.purple { fill: #ac39ac; }
.blue { fill: #2c7fe0; }
.school { fill: #5c5647; font-style: italic; }
.olive { fill: #66653c; }
.tower { fill: #555; font-size: 13px; }
.pitch { fill: #808080; }
.chosen { fill: #00f; }
```
